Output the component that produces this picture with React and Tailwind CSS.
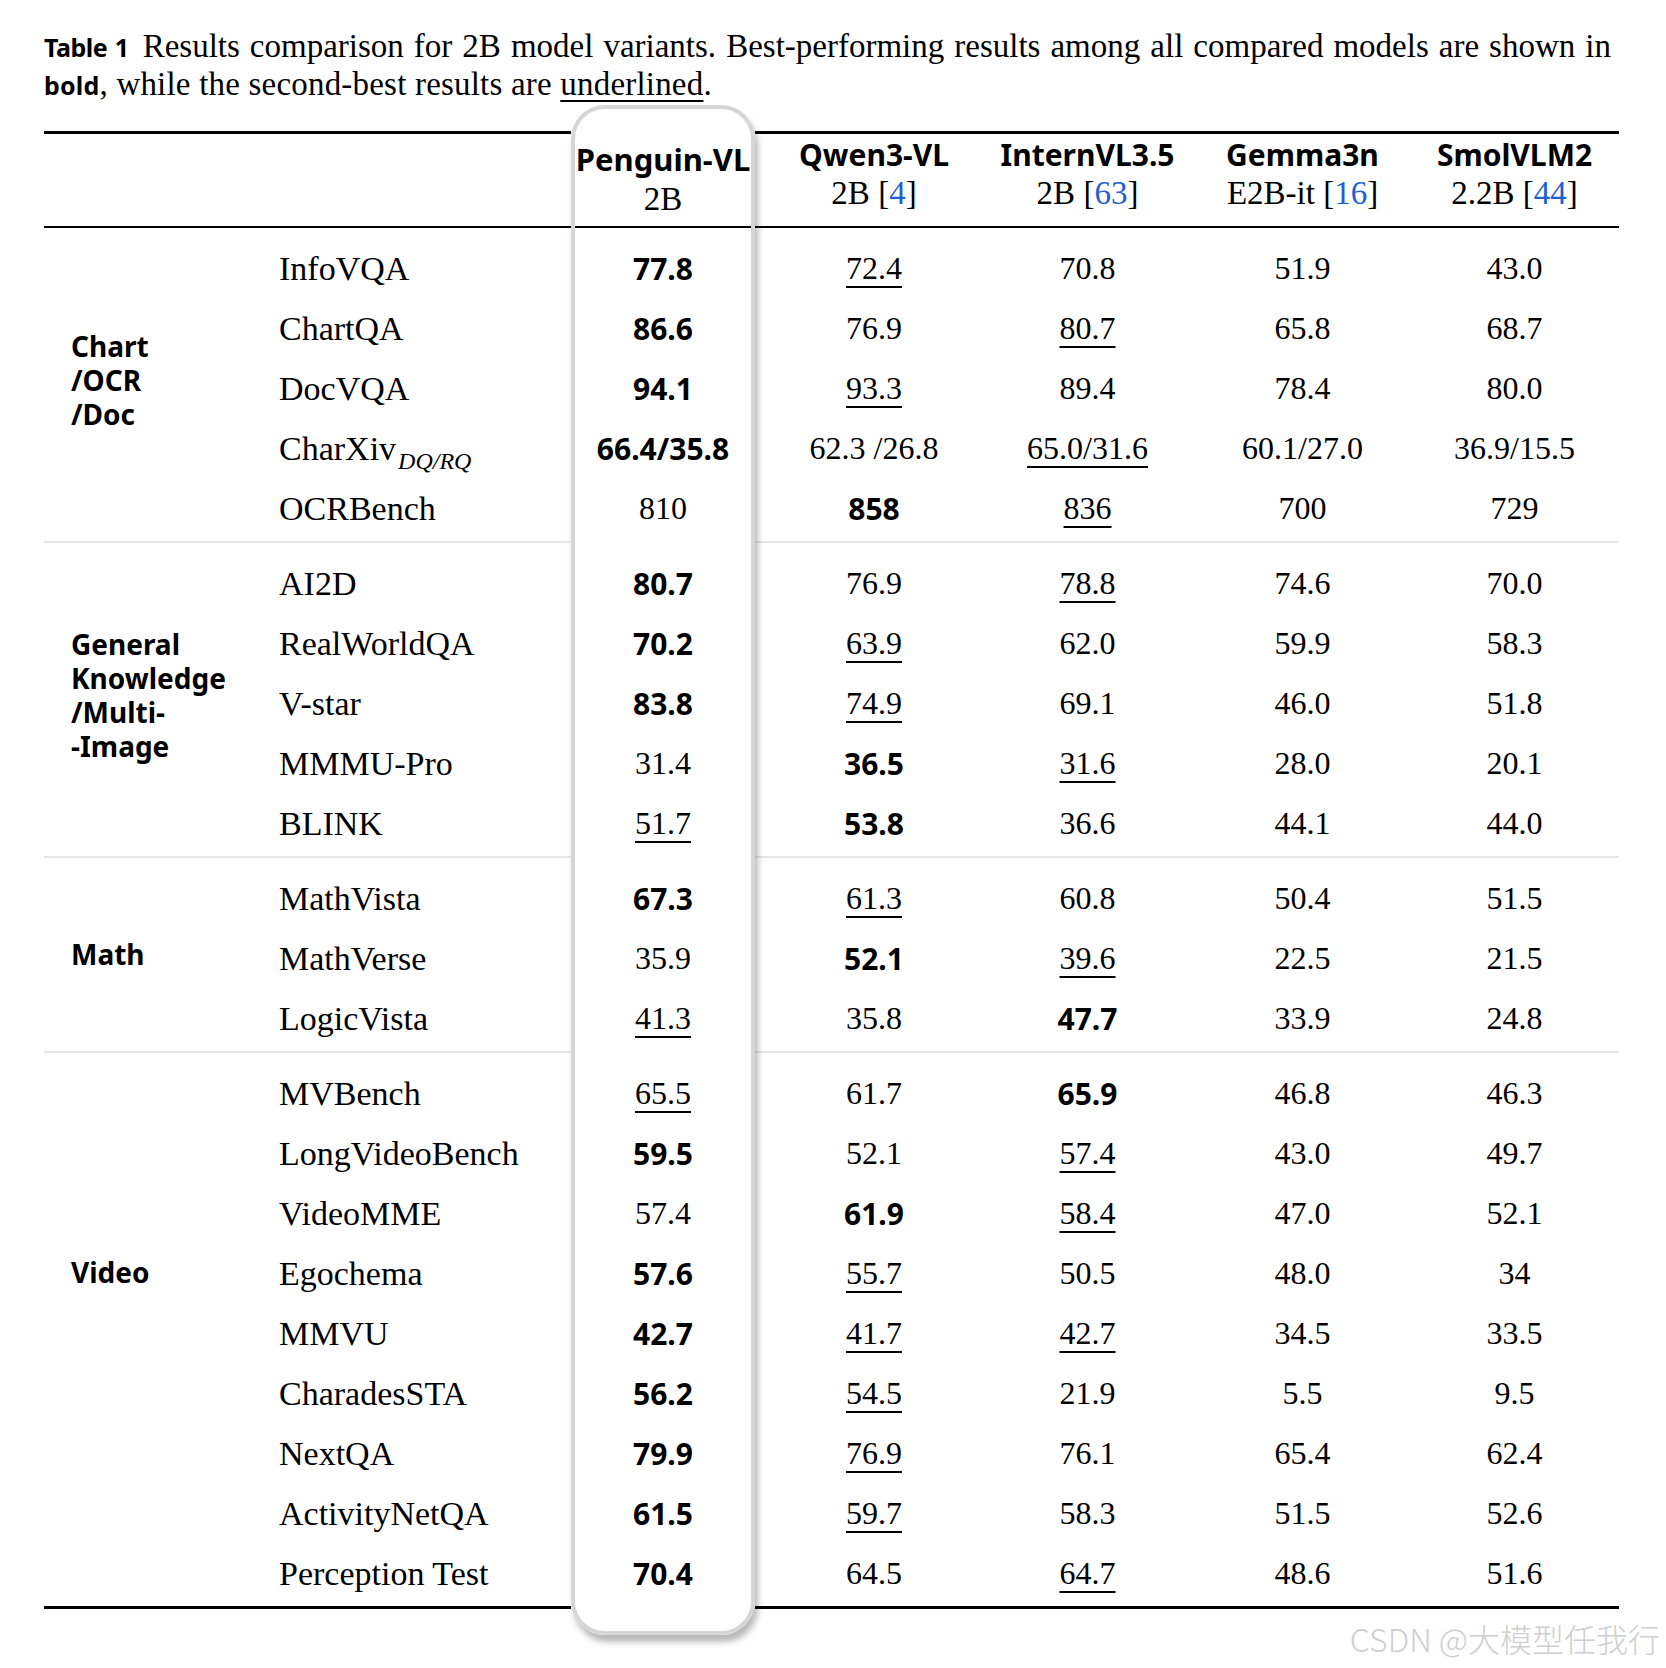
import React from "react";

const serif = "font-['Liberation_Serif','Times_New_Roman',serif]";
const sans = "font-['Noto_Sans','Open_Sans',sans-serif]";
const dataCols = "grid grid-cols-[292px_184px_225px_215px_215px_209px]";

const models = [
  { name: "Qwen3-VL", size: "2B", ref: "4" },
  { name: "InternVL3.5", size: "2B", ref: "63" },
  { name: "Gemma3n", size: "E2B-it", ref: "16" },
  { name: "SmolVLM2", size: "2.2B", ref: "44" },
];

// "*" = best (bold), "_" = second best (underlined)
const sections = [
  {
    label: ["Chart", "/OCR", "/Doc"],
    pad: "pt-[91px]",
    rows: [
      ["InfoVQA", "*77.8", "_72.4", "70.8", "51.9", "43.0"],
      ["ChartQA", "*86.6", "76.9", "_80.7", "65.8", "68.7"],
      ["DocVQA", "*94.1", "_93.3", "89.4", "78.4", "80.0"],
      ["CharXiv", "*66.4/35.8", "62.3 /26.8", "_65.0/31.6", "60.1/27.0", "36.9/15.5"],
      ["OCRBench", "810", "*858", "_836", "700", "729"],
    ],
  },
  {
    label: ["General", "Knowledge", "/Multi-", "-Image"],
    pad: "pt-[74px]",
    rows: [
      ["AI2D", "*80.7", "76.9", "_78.8", "74.6", "70.0"],
      ["RealWorldQA", "*70.2", "_63.9", "62.0", "59.9", "58.3"],
      ["V-star", "*83.8", "_74.9", "69.1", "46.0", "51.8"],
      ["MMMU-Pro", "31.4", "*36.5", "_31.6", "28.0", "20.1"],
      ["BLINK", "_51.7", "*53.8", "36.6", "44.1", "44.0"],
    ],
  },
  {
    label: ["Math"],
    pad: "pt-[69px]",
    rows: [
      ["MathVista", "*67.3", "_61.3", "60.8", "50.4", "51.5"],
      ["MathVerse", "35.9", "*52.1", "_39.6", "22.5", "21.5"],
      ["LogicVista", "_41.3", "35.8", "*47.7", "33.9", "24.8"],
    ],
  },
  {
    label: ["Video"],
    pad: "pt-[192px]",
    rows: [
      ["MVBench", "_65.5", "61.7", "*65.9", "46.8", "46.3"],
      ["LongVideoBench", "*59.5", "52.1", "_57.4", "43.0", "49.7"],
      ["VideoMME", "57.4", "*61.9", "_58.4", "47.0", "52.1"],
      ["Egochema", "*57.6", "_55.7", "50.5", "48.0", "34"],
      ["MMVU", "*42.7", "_41.7", "_42.7", "34.5", "33.5"],
      ["CharadesSTA", "*56.2", "_54.5", "21.9", "5.5", "9.5"],
      ["NextQA", "*79.9", "_76.9", "76.1", "65.4", "62.4"],
      ["ActivityNetQA", "*61.5", "_59.7", "58.3", "51.5", "52.6"],
      ["Perception Test", "*70.4", "64.5", "_64.7", "48.6", "51.6"],
    ],
  },
];

function Cell({ v, extra = "" }) {
  if (v.startsWith("*"))
    return (
      <div className={`text-center ${sans} font-bold text-[30px] ${extra}`}>{v.slice(1)}</div>
    );
  if (v.startsWith("_"))
    return (
      <div className={`text-center ${serif} text-[32px] ${extra}`}>
        <span className="underline decoration-[1.5px] underline-offset-[7px]">{v.slice(1)}</span>
      </div>
    );
  return <div className={`text-center ${serif} text-[32px] ${extra}`}>{v}</div>;
}

function Rule({ h, color }) {
  return (
    <div className={`flex ${h}`}>
      <div className={`w-[527px] ${color}`} />
      <div className="w-[184px]" />
      <div className={`flex-1 ${color}`} />
    </div>
  );
}

export default function App() {
  return (
    <div className="relative w-[1666px] h-[1668px] bg-white text-black px-[44px] pt-[28px]">
      {/* caption */}
      <div className={`w-[1567px] ${serif} text-[33px] leading-[37px]`}>
        <div className="text-justify [text-align-last:justify]">
          <span className={`${sans} font-bold text-[25px] tracking-[-0.5px]`}>Table 1</span>
          <span className="ml-[14px]">
            Results comparison for 2B model variants. Best-performing results among all compared models are shown in
          </span>
        </div>
        <div className="tracking-[0.2px]">
          <span className={`${sans} font-bold text-[25px]`}>bold</span>, while the second-best results are{" "}
          <span className="underline decoration-[1.5px] underline-offset-[5px]">underlined</span>.
        </div>
      </div>

      {/* table */}
      <div className="relative mt-[27px] w-[1575px]">
        <div className="flex">
          <div className="w-[527px] border-t-[3px] border-black" />
          <div className="w-[184px] h-[95px] border-t-[3px] border-transparent text-center pt-[5px]">
            <div className={`${sans} font-bold text-[31px] leading-[40px]`}>Penguin-VL</div>
            <div className={`${serif} text-[33px] leading-[40px]`}>2B</div>
          </div>
          {models.map((m, i) => (
            <div
              key={m.name}
              className={`${["w-[225px] pl-[13px]", "w-[215px]", "w-[215px]", "w-[209px]"][i]} border-t-[3px] border-black text-center pt-[2px]`}
            >
              <div className={`${sans} font-bold text-[30px] leading-[38px]`}>{m.name}</div>
              <div className={`${serif} text-[33px] leading-[38px]`}>
                {m.size} [<span className="text-[#1f5fd0]">{m.ref}</span>]
              </div>
            </div>
          ))}
        </div>
        <div className="h-[2px] bg-black" />

        {sections.map((s, si) => (
          <React.Fragment key={si}>
            <div className="flex pt-[10px] pb-[3px]">
              <div className={`w-[235px] pl-[27px] ${s.pad} ${sans} font-bold text-[28px] leading-[34px]`}>
                {s.label.map((l, li) => (
                  <React.Fragment key={l}>
                    {li > 0 && <br />}
                    {l}
                  </React.Fragment>
                ))}
              </div>
              <div className="flex-1">
                {s.rows.map((r) => (
                  <div key={r[0]} className={`${dataCols} h-[60px] items-center`}>
                    <div className={`${serif} text-[34px]`}>
                      {r[0] === "CharXiv" ? (
                        <>
                          CharXiv
                          <span className="italic text-[24px] relative top-[9px] ml-[2px]">DQ/RQ</span>
                        </>
                      ) : (
                        r[0]
                      )}
                    </div>
                    {r.slice(1).map((v, ci) => (
                      <Cell key={ci} v={v} extra={ci === 1 ? "pl-[13px]" : ""} />
                    ))}
                  </div>
                ))}
              </div>
            </div>
            {si < sections.length - 1 ? (
              <Rule h="h-[2px]" color="bg-[#e6e6e6]" />
            ) : (
              <Rule h="h-[3px]" color="bg-black" />
            )}
          </React.Fragment>
        ))}

        {/* highlight box around Penguin-VL column */}
        <div className="pointer-events-none absolute left-[527px] top-[-26px] w-[184px] h-[1530px] rounded-[34px] border-[4px] border-[#d6d6d6] shadow-[3px_7px_6px_rgba(0,0,0,0.28)]" />
      </div>

      <div className="absolute right-[6px] bottom-[10px] text-[32px] leading-[40px] text-[#cfcfcf] font-['Noto_Sans_CJK_SC',sans-serif] font-light">
        CSDN @大模型任我行
      </div>
    </div>
  );
}
